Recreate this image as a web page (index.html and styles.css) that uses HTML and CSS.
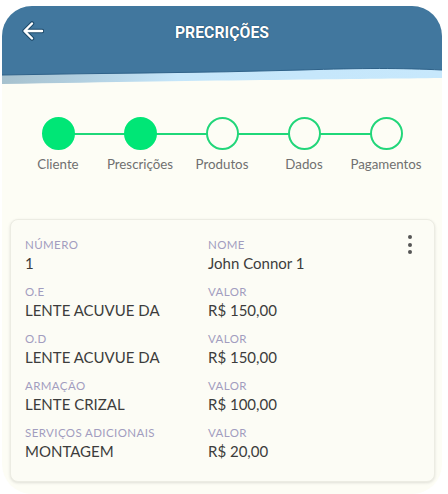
FILE: index.html
```html
<!DOCTYPE html>
<html lang="pt-BR">
<head>
<meta charset="utf-8">
<title>Precrições</title>
<link rel="stylesheet" href="styles.css">
</head>
<body>
<div class="screen">
  <header class="appbar">
    <button class="back" aria-label="Voltar">
      <svg width="22" height="20" viewBox="0 0 22 20">
        <path d="M20 10H3M10 2.5L2.5 10L10 17.5" fill="none" stroke="#1d4a6b" stroke-width="4.5" stroke-linecap="round" stroke-linejoin="round"/>
        <path d="M20 10H3M10 2.5L2.5 10L10 17.5" fill="none" stroke="#ffffff" stroke-width="2.4" stroke-linecap="round" stroke-linejoin="round"/>
      </svg>
    </button>
    <h1 class="title">PRECRIÇÕES</h1>
  </header>
  <svg class="wave" viewBox="0 0 440 28" preserveAspectRatio="none">
    <defs>
      <linearGradient id="band" x1="0" x2="1" y1="0" y2="0">
        <stop offset="0" stop-color="#a6c1ce"/>
        <stop offset="0.2" stop-color="#b3d1e2"/>
        <stop offset="0.4" stop-color="#c5e6fa"/>
        <stop offset="1" stop-color="#c7e8fc"/>
      </linearGradient>
    </defs>
    <path d="M0 0H440V20C360 21 220 22 0 26Z" fill="url(#band)"/>
    <path d="M0 0H440V12C400 10 360 10 300 12C200 15 100 15 0 17Z" fill="#41779e"/>
    <path d="M0 17C100 15 200 15 300 12C360 10 400 10 440 12" fill="none" stroke="#2f6289" stroke-width="1"/>
  </svg>

  <nav class="stepper">
    <div class="step done"><span class="dot"></span><span class="label">Cliente</span></div>
    <div class="step done"><span class="dot"></span><span class="label">Prescrições</span></div>
    <div class="step"><span class="dot"></span><span class="label">Produtos</span></div>
    <div class="step"><span class="dot"></span><span class="label">Dados</span></div>
    <div class="step"><span class="dot"></span><span class="label">Pagamentos</span></div>
  </nav>

  <section class="card">
    <button class="menu" aria-label="Mais opções"><span></span><span></span><span></span></button>
    <div class="field"><div class="flabel">NÚMERO</div><div class="fvalue">1</div></div>
    <div class="field"><div class="flabel">NOME</div><div class="fvalue">John Connor 1</div></div>
    <div class="field"><div class="flabel">O.E</div><div class="fvalue">LENTE ACUVUE DA</div></div>
    <div class="field"><div class="flabel">VALOR</div><div class="fvalue">R$ 150,00</div></div>
    <div class="field"><div class="flabel">O.D</div><div class="fvalue">LENTE ACUVUE DA</div></div>
    <div class="field"><div class="flabel">VALOR</div><div class="fvalue">R$ 150,00</div></div>
    <div class="field"><div class="flabel">ARMAÇÃO</div><div class="fvalue">LENTE CRIZAL</div></div>
    <div class="field"><div class="flabel">VALOR</div><div class="fvalue">R$ 100,00</div></div>
    <div class="field"><div class="flabel">SERVIÇOS ADICIONAIS</div><div class="fvalue">MONTAGEM</div></div>
    <div class="field"><div class="flabel">VALOR</div><div class="fvalue">R$ 20,00</div></div>
  </section>
</div>
</body>
</html>
```

FILE: styles.css
```css
* { box-sizing: border-box; }

html, body {
  margin: 0;
  padding: 0;
  background: #ffffff;
}

body {
  width: 448px;
  height: 494px;
  overflow: hidden;
  font-family: Lato, "Noto Sans", sans-serif;
}

.screen {
  margin: 6px 6px 0 2px;
  width: 440px;
  height: 488px;
  border-radius: 30px;
  background: #fdfdf5;
  overflow: hidden;
  display: flex;
  flex-direction: column;
}

.appbar {
  height: 52px;
  background: #41779e;
  display: flex;
  align-items: center;
  justify-content: center;
  position: relative;
}

.back {
  position: absolute;
  left: 20px;
  top: 15px;
  padding: 0;
  border: 0;
  background: none;
  width: 22px;
  height: 20px;
  display: flex;
}

.title {
  margin: 0;
  color: #ffffff;
  font-family: Roboto, "Liberation Sans", sans-serif;
  font-weight: 700;
  font-size: 15.8px;
  letter-spacing: 0;
  text-shadow: 0 0 1px #1b4666, 0 0 1px #1b4666;
}

.wave {
  display: block;
  width: 440px;
  height: 28px;
}

.stepper {
  margin-top: 31px;
  display: grid;
  grid-template-columns: repeat(5, 82px);
  justify-content: center;
}

.step {
  display: flex;
  flex-direction: column;
  align-items: center;
  position: relative;
}

.step + .step::before {
  content: "";
  position: absolute;
  left: -50%;
  right: 50%;
  top: 16px;
  height: 1.5px;
  background: #1fd879;
}

.dot {
  width: 33px;
  height: 33px;
  border-radius: 50%;
  border: 2px solid #22d67a;
  background: #fdfdf5;
  position: relative;
  z-index: 1;
}

.step.done .dot {
  background: #00e676;
  border-color: #00e676;
}

.label {
  margin-top: 6px;
  font-size: 13.3px;
  line-height: 16px;
  color: #707070;
  white-space: nowrap;
}

.card {
  margin: 47px 7px 0 8px;
  padding: 18px 14px 20px 14px;
  background: #fcfcf5;
  border: 1px solid #ecece3;
  border-radius: 8px;
  box-shadow: 0 1px 3px rgba(0, 0, 0, 0.12);
  display: grid;
  grid-template-columns: 183px 1fr;
  row-gap: 12px;
  position: relative;
}

.menu {
  position: absolute;
  right: 22px;
  top: 15px;
  border: 0;
  background: none;
  padding: 0;
  display: flex;
  flex-direction: column;
  gap: 3.5px;
}

.menu span {
  width: 4px;
  height: 4px;
  border-radius: 50%;
  background: #555555;
}

.flabel {
  font-size: 11.5px;
  line-height: 14px;
  letter-spacing: 0.4px;
  font-weight: 400;
  color: #a29dbf;
  white-space: nowrap;
}

.fvalue {
  margin-top: 1px;
  font-size: 15px;
  line-height: 20px;
  color: #3c3c3c;
}
```
